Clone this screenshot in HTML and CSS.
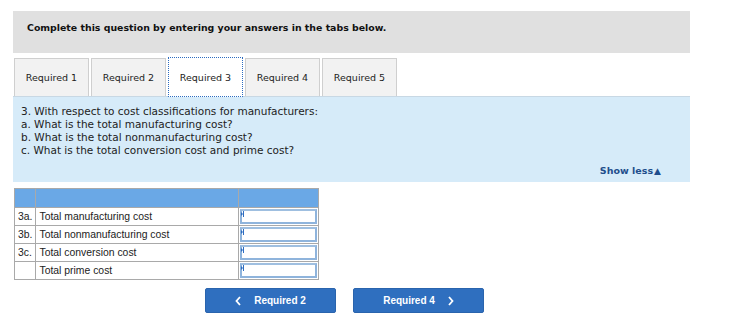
FILE: index.html
```html
<!DOCTYPE html>
<html lang="en">
<head>
    <meta charset="UTF-8">
    <title>Required 3</title>
    <link rel="stylesheet" href="styles.css">
</head>
<body>

<div class="question">
    <div class="instructions">Complete this question by entering your answers in the tabs below.</div>

    <div class="tabs">
        <div class="tab">Required 1</div>
        <div class="tab">Required 2</div>
        <div class="tab active">Required 3</div>
        <div class="tab">Required 4</div>
        <div class="tab">Required 5</div>
    </div>

    <div class="prompt">
        <p>3. With respect to cost classifications for manufacturers:</p>
        <p>a. What is the total manufacturing cost?</p>
        <p>b. What is the total nonmanufacturing cost?</p>
        <p>c. What is the total conversion cost and prime cost?</p>
        <div class="show-less">Show less<span class="arrow">&#9650;</span></div>
    </div>

    <table class="answers">
        <tr class="head">
            <th class="num"></th>
            <th class="label"></th>
            <th class="value"></th>
        </tr>
        <tr>
            <td class="num">3a.</td>
            <td class="label">Total manufacturing cost</td>
            <td class="value"><div class="field"><span class="caret"></span></div></td>
        </tr>
        <tr>
            <td class="num">3b.</td>
            <td class="label">Total nonmanufacturing cost</td>
            <td class="value"><div class="field"><span class="caret"></span></div></td>
        </tr>
        <tr>
            <td class="num">3c.</td>
            <td class="label">Total conversion cost</td>
            <td class="value"><div class="field"><span class="caret"></span></div></td>
        </tr>
        <tr>
            <td class="num"></td>
            <td class="label">Total prime cost</td>
            <td class="value"><div class="field"><span class="caret"></span></div></td>
        </tr>
    </table>

    <div class="pager">
        <button class="nav-btn">
            <svg class="chev" width="6" height="10" viewBox="0 0 6 10"><path d="M5 1 L1.5 5 L5 9" fill="none" stroke="#fff" stroke-width="1.8"/></svg>
            Required 2
        </button>
        <button class="nav-btn">
            Required 4
            <svg class="chev" width="6" height="10" viewBox="0 0 6 10"><path d="M1 1 L4.5 5 L1 9" fill="none" stroke="#fff" stroke-width="1.8"/></svg>
        </button>
    </div>
</div>

</body>
</html>
```

FILE: styles.css
```css
* {
    margin: 0;
    padding: 0;
    box-sizing: border-box;
}

body {
    font-family: 'DejaVu Sans', Verdana, sans-serif;
    background: #fff;
    color: #222;
}

.question {
    width: 677px;
    margin-left: 13px;
    padding-top: 11px;
}

/* Instructions bar */
.instructions {
    height: 42px;
    background: #e0e0e0;
    padding: 11px 0 0 14px;
    font-size: 9.4px;
    font-weight: bold;
    color: #111;
}

/* Tabs */
.tabs {
    display: flex;
    gap: 2px;
    margin-top: 5px;
    padding-left: 1px;
}

.tab {
    width: 75px;
    height: 38px;
    background: #f2f2f2;
    border: 1px solid #cfcfcf;
    border-bottom: none;
    font-size: 9.5px;
    color: #222;
    display: flex;
    align-items: center;
    justify-content: center;
}

.tab.active {
    background: #fff;
    border: 1px dotted #2d6cc0;
    height: 40px;
    margin-top: -1px;
    margin-bottom: -1px;
    position: relative;
    z-index: 1;
}

/* Question prompt */
.prompt {
    background: #d6ebf9;
    border-top: 1px solid #c8d8e4;
    padding: 8px 8px 4px;
    font-size: 10.5px;
    line-height: 13px;
    color: #222;
}

.show-less {
    text-align: right;
    margin-top: 7px;
    padding-right: 21px;
    font-size: 9.5px;
    font-weight: bold;
    color: #1f4e8c;
}

.show-less .arrow {
    font-size: 9px;
    margin-left: 1px;
}

/* Answer table */
.answers {
    margin-top: 6px;
    margin-left: 1px;
    border-collapse: collapse;
    font-family: 'Liberation Sans', Arial, sans-serif;
    font-size: 10.4px;
    color: #222;
}

.answers th, .answers td {
    border: 1px solid #a9a9a9;
    height: 18px;
    padding: 0 3px;
    text-align: left;
    font-weight: normal;
}

.answers .head th {
    background: #6aa8e6;
    height: 19px;
}

.answers .num {
    width: 20px;
}

.answers .label {
    width: 203px;
}

.answers .value {
    width: 80px;
    padding: 1px;
}

.field {
    height: 15px;
    border: 2px solid #8fb4dc;
    border-top-color: #9fbfe0;
    background: #fff;
    position: relative;
}

.caret {
    position: absolute;
    left: 1px;
    top: 0;
    width: 1px;
    height: 6px;
    background: #2d6cc0;
}

.caret::before {
    content: '';
    position: absolute;
    left: -2px;
    top: 1px;
    border-left: 2px solid #2d6cc0;
    border-top: 2px solid transparent;
    border-bottom: 2px solid transparent;
}

/* Previous / next */
.pager {
    display: flex;
    gap: 17px;
    margin-top: 8px;
    padding-left: 192px;
}

.nav-btn {
    width: 131px;
    height: 25px;
    background: #2f6fbf;
    border: 1px solid #2a64ad;
    border-radius: 2px;
    color: #fff;
    font-family: 'Liberation Sans', Arial, sans-serif;
    font-size: 10px;
    font-weight: bold;
    display: flex;
    align-items: center;
    justify-content: center;
    gap: 13px;
}
```
